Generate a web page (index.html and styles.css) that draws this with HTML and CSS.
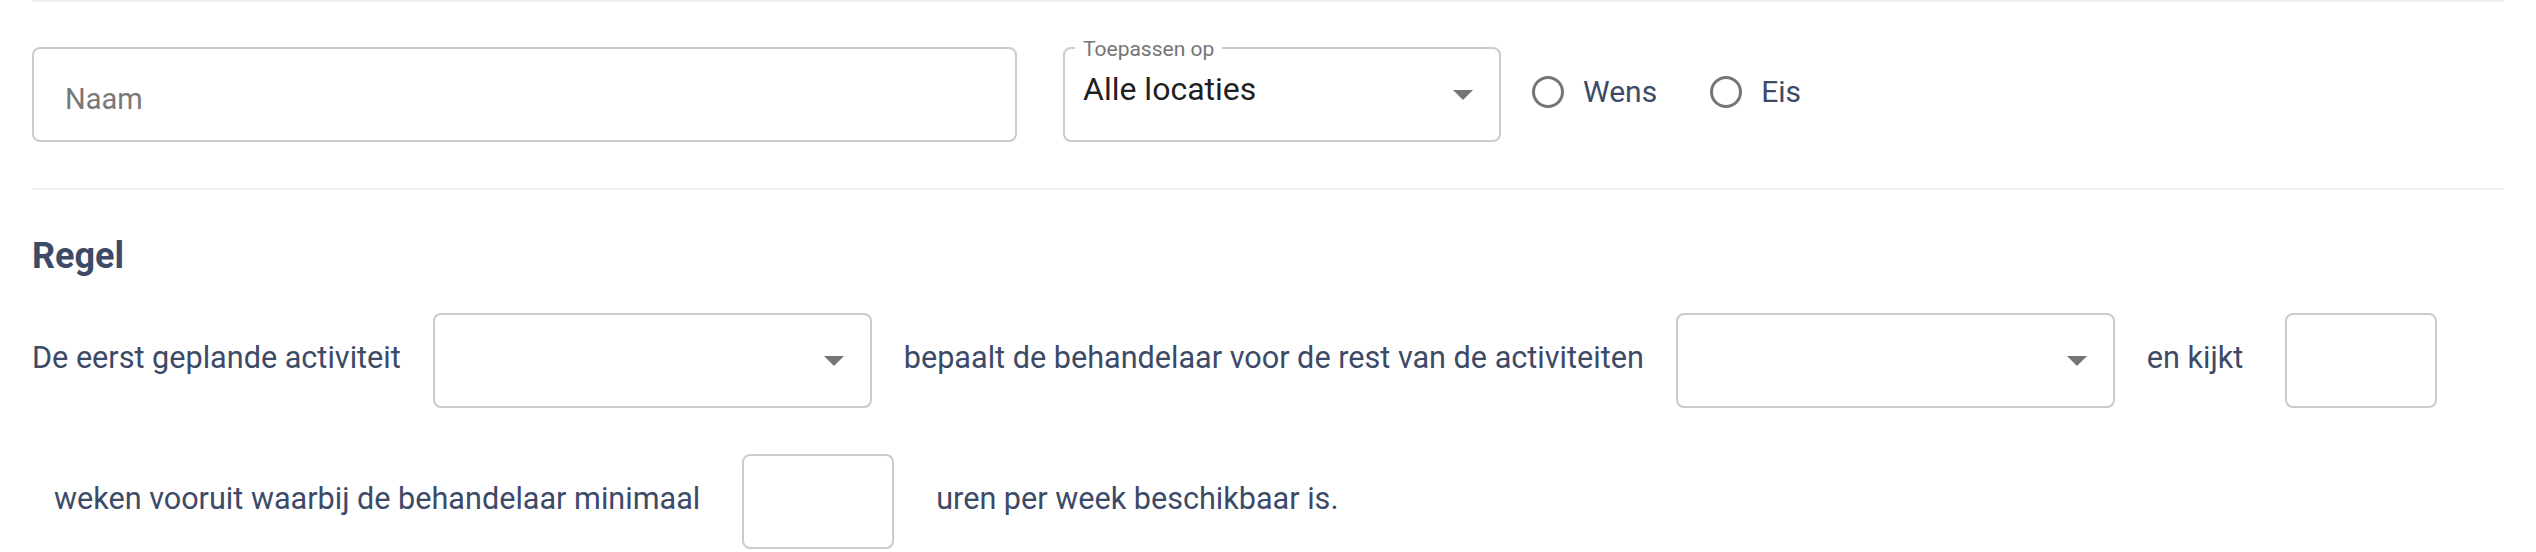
FILE: index.html
```html
<!DOCTYPE html>
<html lang="nl">
<head>
    <meta charset="UTF-8">
    <meta name="viewport" content="width=device-width, initial-scale=1.0">
    <title>Regel instellen</title>
    <link rel="stylesheet" href="styles.css">
</head>
<body>

<div class="page">
    <div class="divider"></div>

    <div class="top-row">
        <input class="name-input" type="text" placeholder="Naam">
        <div class="select location-select">
            <span class="select-label">Toepassen op</span>
            <span class="select-value">Alle locaties</span>
            <span class="arrow"></span>
        </div>
        <div class="radio-group">
            <label class="radio"><span class="radio-circle"></span>Wens</label>
            <label class="radio"><span class="radio-circle"></span>Eis</label>
        </div>
    </div>

    <div class="divider"></div>

    <h3>Regel</h3>

    <div class="rule">
        <span class="rule-text">De eerst geplande activiteit</span>
        <div class="select rule-select"><span class="arrow"></span></div>
        <span class="rule-text">bepaalt de behandelaar voor de rest van de activiteiten</span>
        <div class="select rule-select"><span class="arrow"></span></div>
        <span class="rule-text">en kijkt</span>
        <input class="number-input" type="text">
        <span class="rule-text">weken vooruit waarbij de behandelaar minimaal</span>
        <input class="number-input" type="text">
        <span class="rule-text">uren per week beschikbaar is.</span>
    </div>
</div>

</body>
</html>
```

FILE: styles.css
```css
body {
    margin: 0;
    font-family: Roboto, "Liberation Sans", sans-serif;
    background: #fff;
    color: #3c4a68;
}
.page {
    padding: 0 32px;
}
.divider {
    height: 2px;
    background: #efefef;
}

/* bovenste rij */
.top-row {
    display: flex;
    align-items: center;
    margin: 45px 0 46px;
}
.name-input {
    width: 985px;
    height: 95px;
    box-sizing: border-box;
    border: 2px solid #cbcbcb;
    border-radius: 8px;
    padding: 8px 31px 0;
    font-family: Roboto, sans-serif;
    font-size: 29px;
    color: #212121;
    outline: none;
}
.name-input::placeholder {
    color: #787878;
}
.select {
    position: relative;
    box-sizing: border-box;
    height: 95px;
    border: 2px solid #cbcbcb;
    border-radius: 8px;
    display: flex;
    align-items: center;
    justify-content: flex-end;
    padding-right: 26px;
    background: #fff;
}
.location-select {
    width: 438px;
    margin-left: 46px;
    justify-content: space-between;
    padding-left: 18px;
}
.select-label {
    position: absolute;
    top: -12px;
    left: 10px;
    padding: 0 8px;
    background: #fff;
    font-size: 21px;
    line-height: 24px;
    color: #757575;
}
.select-value {
    align-self: flex-start;
    padding-top: 21px;
    font-size: 32px;
    line-height: 38px;
    color: #1f1f1f;
}
.arrow {
    width: 0;
    height: 0;
    border-left: 10.5px solid transparent;
    border-right: 10.5px solid transparent;
    border-top: 10px solid #757575;
}
.radio-group {
    display: flex;
    gap: 53px;
    margin: -6px 0 0 31px;
}
.radio {
    display: flex;
    align-items: center;
    gap: 19px;
    font-size: 30px;
    color: #3c4a68;
}
.radio-circle {
    width: 32px;
    height: 32px;
    box-sizing: border-box;
    border: 3px solid #757575;
    border-radius: 50%;
}

/* regel */
h3 {
    margin: 45px 0 36px;
    font-size: 36px;
    line-height: 42px;
    font-weight: 700;
    color: #3c4a68;
}
.rule {
    display: flex;
    flex-wrap: wrap;
    align-items: center;
    row-gap: 46px;
}
.rule-text {
    margin: 0 22px 6px;
    font-size: 30.6px;
    line-height: 36px;
}
.rule-text:first-child {
    margin-left: 0;
}
.rule-select {
    width: 439px;
    margin: 0 10px;
}
.number-input {
    width: 152px;
    height: 95px;
    box-sizing: border-box;
    border: 2px solid #cbcbcb;
    border-radius: 8px;
    margin: 0 20px;
    padding: 0 12px;
    font-family: Roboto, sans-serif;
    font-size: 29px;
    outline: none;
}
```
